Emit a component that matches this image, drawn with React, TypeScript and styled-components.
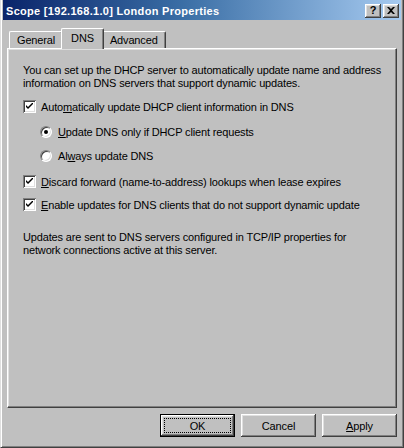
import React from "react";
import styled, { createGlobalStyle } from "styled-components";

const GlobalStyle = createGlobalStyle`
  html, body { margin: 0; padding: 0; background: #c0c0c0; }
  body { font-family: "Liberation Sans", Arial, sans-serif; font-size: 11px; letter-spacing: -0.15px; color: #000; }
  * { box-sizing: border-box; }
`;

const Window = styled.div`
  width: 404px;
  height: 448px;
  background: #c0c0c0;
  border-left: 1px solid #dfdfdf;
  border-right: 1px solid #404040;
  border-bottom: 1px solid #404040;
  box-shadow: inset 1px 0 #ffffff, inset -1px -1px #808080;
  display: flex;
  flex-direction: column;
  padding: 0 1px 2px 1px;
`;

const TitleBar = styled.div`
  height: 20px;
  margin: 0 1px;
  background: linear-gradient(to right, #0a246a 0%, #3a6ea5 45%, #a6caf0 100%);
  display: flex;
  align-items: center;
  padding: 1px 2px 0 3px;
  gap: 2px;
`;

const Title = styled.div`
  flex: 1;
  color: #fff;
  font-weight: bold;
  font-size: 11px;
  letter-spacing: 0.3px;
  white-space: nowrap;
`;

const CapButton = styled.div`
  width: 16px;
  height: 14px;
  background: #c0c0c0;
  box-shadow: inset -1px -1px #404040, inset 1px 1px #ffffff, inset -2px -2px #808080, inset 2px 2px #dfdfdf;
  display: flex;
  align-items: center;
  justify-content: center;
  font-weight: bold;
  font-size: 11px;
  line-height: 1;
  color: #000;
`;

const Body = styled.div`
  flex: 1;
  display: flex;
  flex-direction: column;
  padding: 0 5px;
`;

const TabStrip = styled.div`
  height: 28px;
  display: flex;
  align-items: flex-end;
  padding-left: 2px;
  position: relative;
  z-index: 1;
`;

const Tab = styled.div<{ $active?: boolean }>`
  height: ${(p) => (p.$active ? "21px" : "17px")};
  margin: ${(p) => (p.$active ? "0 -2px -1px -2px" : "0")};
  padding: ${(p) => (p.$active ? "3px 9px 0 9px" : "2px 7px 0 7px")};
  background: #c0c0c0;
  border-top: 1px solid #ffffff;
  border-left: 1px solid #ffffff;
  border-right: 1px solid #404040;
  border-radius: 2px 2px 0 0;
  box-shadow: inset -1px 0 #808080;
  white-space: nowrap;
  position: relative;
  z-index: ${(p) => (p.$active ? 2 : 1)};
`;

const Panel = styled.div`
  height: 360px;
  background: #c0c0c0;
  border-top: 1px solid #ffffff;
  border-left: 1px solid #ffffff;
  border-right: 1px solid #404040;
  border-bottom: 1px solid #404040;
  box-shadow: inset -1px -1px #808080, inset 1px 1px #dfdfdf;
  padding: 15px 10px 0 15px;
  display: flex;
  flex-direction: column;
`;

const Para = styled.p<{ $gap?: number }>`
  margin: ${(p) => p.$gap ?? 0}px 0 0 0;
  line-height: 13px;
  white-space: pre;
`;

const Row = styled.label<{ $gap: number; $indent?: number }>`
  display: flex;
  align-items: center;
  height: 13px;
  margin-top: ${(p) => p.$gap}px;
  margin-left: ${(p) => p.$indent ?? 0}px;
  gap: 5px;
  white-space: nowrap;
`;

const CheckBox = styled.span`
  width: 13px;
  height: 13px;
  flex: none;
  background: #fff;
  box-shadow: inset 1px 1px #808080, inset -1px -1px #ffffff, inset 2px 2px #404040, inset -2px -2px #dfdfdf;
  display: flex;
  align-items: center;
  justify-content: center;
`;

const Radio = styled.span<{ $on?: boolean }>`
  width: 12px;
  height: 12px;
  flex: none;
  border-radius: 50%;
  background: #fff;
  border: 1px solid;
  border-color: #808080 #ffffff #ffffff #808080;
  box-shadow: inset 1px 1px #404040, inset -1px -1px #dfdfdf;
  display: flex;
  align-items: center;
  justify-content: center;
  margin-right: 1px;
  &::after {
    content: "";
    width: 4px;
    height: 4px;
    border-radius: 50%;
    background: #000;
    display: ${(p) => (p.$on ? "block" : "none")};
  }
`;

const Key = styled.span`
  text-decoration: underline;
`;

const ButtonRow = styled.div`
  display: flex;
  justify-content: flex-end;
  gap: 6px;
  padding-top: 6px;
`;

const Button = styled.div<{ $default?: boolean }>`
  width: 75px;
  height: 23px;
  background: #c0c0c0;
  display: flex;
  align-items: center;
  justify-content: center;
  position: relative;
  box-shadow: ${(p) =>
    p.$default
      ? "inset 0 0 0 1px #000, inset -2px -2px #404040, inset 2px 2px #ffffff, inset -3px -3px #808080, inset 3px 3px #dfdfdf"
      : "inset -1px -1px #404040, inset 1px 1px #ffffff, inset -2px -2px #808080, inset 2px 2px #dfdfdf"};
`;

const Focus = styled.span`
  position: absolute;
  inset: 4px;
  border: 1px dotted #000;
`;

const Check = () => (
  <svg width="7" height="7" viewBox="0 0 7 7">
    <path d="M0 2 L0 4 L2 6 L7 1 L7 -1 L2 4 Z" fill="#000" />
  </svg>
);

export default function App() {
  return (
    <>
      <GlobalStyle />
      <Window>
        <TitleBar>
          <Title>Scope [192.168.1.0] London Properties</Title>
          <CapButton>?</CapButton>
          <CapButton>
            <svg width="8" height="7" viewBox="0 0 8 7">
              <path d="M0 0h2l2 2 2-2h2L5 3.5 8 7H6L4 5 2 7H0l3-3.5z" fill="#000" />
            </svg>
          </CapButton>
        </TitleBar>
        <Body>
          <TabStrip>
            <Tab>General</Tab>
            <Tab $active>DNS</Tab>
            <Tab>Advanced</Tab>
          </TabStrip>
          <Panel>
            <Para>
              {"You can set up the DHCP server to automatically update name and address\ninformation on DNS servers that support dynamic updates."}
            </Para>
            <Row $gap={10}>
              <CheckBox><Check /></CheckBox>
              <span>Auto<Key>m</Key>atically update DHCP client information in DNS</span>
            </Row>
            <Row $gap={12} $indent={17}>
              <Radio $on />
              <span><Key>U</Key>pdate DNS only if DHCP client requests</span>
            </Row>
            <Row $gap={11} $indent={17}>
              <Radio />
              <span>Al<Key>w</Key>ays update DNS</span>
            </Row>
            <Row $gap={13}>
              <CheckBox><Check /></CheckBox>
              <span><Key>D</Key>iscard forward (name-to-address) lookups when lease expires</span>
            </Row>
            <Row $gap={10}>
              <CheckBox><Check /></CheckBox>
              <span><Key>E</Key>nable updates for DNS clients that do not support dynamic update</span>
            </Row>
            <Para $gap={20}>
              {"Updates are sent to DNS servers configured in TCP/IP properties for\nnetwork connections active at this server."}
            </Para>
          </Panel>
          <ButtonRow>
            <Button $default><Focus />OK</Button>
            <Button>Cancel</Button>
            <Button><span><Key>A</Key>pply</span></Button>
          </ButtonRow>
        </Body>
      </Window>
    </>
  );
}
